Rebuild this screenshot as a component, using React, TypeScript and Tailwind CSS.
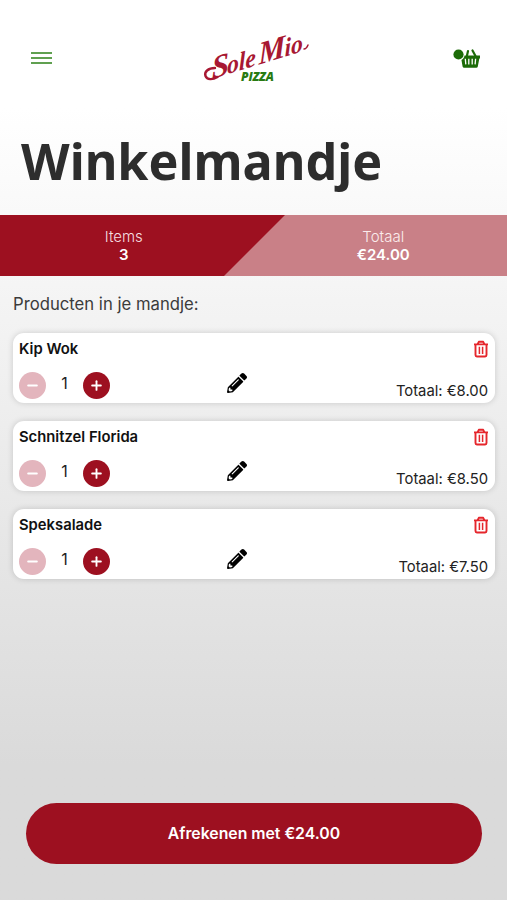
import React from 'react';
import { FaPencilAlt } from 'react-icons/fa';
import { FiMinus, FiPlus } from 'react-icons/fi';

interface CartItem {
  id: number;
  name: string;
  quantity: number;
  total: string;
}

const items: CartItem[] = [
  { id: 1, name: 'Kip Wok', quantity: 1, total: '€8.00' },
  { id: 2, name: 'Schnitzel Florida', quantity: 1, total: '€8.50' },
  { id: 3, name: 'Speksalade', quantity: 1, total: '€7.50' },
];

const Logo: React.FC = () => (
  <svg className="h-[64px] w-[120px] overflow-visible" viewBox="0 0 120 64" role="img" aria-label="Sole Mio Pizza">
    <g
      transform="translate(12 53) rotate(-17) skewX(-16)"
      className="fill-[#a81832] font-['Liberation_Serif',serif] font-bold italic"
    >
      <text className="text-[31px]" textLength="18" lengthAdjust="spacingAndGlyphs">S</text>
      <text x="16" className="text-[25px]" textLength="30" lengthAdjust="spacingAndGlyphs">ole</text>
      <text x="49" className="text-[31px]" textLength="28" lengthAdjust="spacingAndGlyphs">M</text>
      <text x="76" className="text-[25px]" textLength="19" lengthAdjust="spacingAndGlyphs">io</text>
    </g>
    {/* swashes on the capitals and the last letter */}
    <g className="fill-none stroke-[#a81832]" strokeLinecap="round">
      <path d="M15 42C8 42 4 46 5.500 50c1.500 4 7 4 12 1" strokeWidth="2.4" />
      <path d="M104 23c2 0 3-1.500 4-4" strokeWidth="1.500" />
    </g>
    <text
      x="41"
      y="55"
      className="fill-[#287a12] font-['Open_Sans',sans-serif] text-[12.5px] font-extrabold italic"
      textLength="33"
      lengthAdjust="spacingAndGlyphs"
    >
      PIZZA
    </text>
  </svg>
);

const BasketIcon: React.FC = () => (
  <svg className="h-[22px] w-[28px] text-[#1c6b08]" viewBox="0 0 28 22" fill="none">
    <path d="M14 8.500 15 4M19.500 3.500 22.500 9" stroke="currentColor" strokeWidth="2.2" strokeLinecap="round" />
    <path d="M8 8.500h19v3h-.7l-1.500 8a1.600 1.600 0 0 1-1.600 1.300H11.200a1.600 1.600 0 0 1-1.600-1.300L8.200 11.500H8Z" fill="currentColor" />
    <path d="M12.300 11.800l.5 5.600M15.800 11.800v5.600M19.200 11.800v5.600M22.600 11.800l-.5 5.600" stroke="white" strokeWidth="1.300" />
    <circle cx="5.500" cy="7.500" r="6.200" fill="white" />
    <circle cx="5.500" cy="7.500" r="5.100" fill="currentColor" />
  </svg>
);

const TrashIcon: React.FC = () => (
  <svg className="h-[18px] w-[16px] text-[#e5262c]" viewBox="0 0 16 18" fill="none" stroke="currentColor" strokeWidth="1.9">
    <path d="M1 4.400h14M4.600 4.200 5.800 1.800h4.400l1.200 2.400" strokeLinejoin="round" />
    <path d="M2.500 4.600v10.500c0 .8.6 1.400 1.400 1.400h8.200c.8 0 1.400-.6 1.400-1.400V4.600" />
    <path d="M6.400 6.800v7.200M9.600 6.800v7.200" strokeWidth="1.500" />
  </svg>
);

const Header: React.FC = () => (
  <header className="flex h-[108px] items-center justify-between bg-white pt-[7px] pr-[26px] pl-[31px]">
    <button className="flex w-[36px] flex-col gap-[3px]" aria-label="Menu">
      <span className="h-[2px] w-[21px] bg-[#60a050]" />
      <span className="h-[2px] w-[21px] bg-[#60a050]" />
      <span className="h-[2px] w-[21px] bg-[#60a050]" />
    </button>
    <Logo />
    <button aria-label="Winkelmandje">
      <BasketIcon />
    </button>
  </header>
);

const Summary: React.FC = () => (
  <section className="relative grid h-[61px] grid-cols-2 bg-[#c98087] text-center text-[15px] leading-[18px] text-white">
    <div className="absolute inset-y-0 left-0 w-[285px] bg-[#9d1020] [clip-path:polygon(0_0,100%_0,224px_100%,0_100%)]" />
    <div className="relative pt-[13px] pr-[6px]">
      <p className="font-light text-[#f6dfe1]">Items</p>
      <p className="font-semibold">3</p>
    </div>
    <div className="relative pt-[13px] pl-[6px]">
      <p className="font-light text-[#fbecec]">Totaal</p>
      <p className="font-semibold">€24.00</p>
    </div>
  </section>
);

const CartCard: React.FC<{ item: CartItem }> = ({ item }) => (
  <li className="flex h-[70px] flex-col justify-between rounded-[11px] bg-white px-[6px] pt-[6px] pb-[3px] shadow-[0_0_6px_rgba(0,0,0,0.16)]">
    <div className="flex h-5 items-start justify-between">
      <h3 className="text-[14.8px] leading-5 font-semibold text-[#111]">{item.name}</h3>
      <button className="pt-[1px]" aria-label="Verwijderen">
        <TrashIcon />
      </button>
    </div>
    <div className="grid grid-cols-3 items-end">
      <div className="flex items-center">
        <button className="flex size-[27px] items-center justify-center rounded-full bg-[#e3b5bd] text-white" aria-label="Minder">
          <FiMinus className="size-[15px]" strokeWidth={3} />
        </button>
        <span className="w-[37px] pb-[5px] text-center text-[16px] text-[#222]">{item.quantity}</span>
        <button className="flex size-[27px] items-center justify-center rounded-full bg-[#9d1020] text-white" aria-label="Meer">
          <FiPlus className="size-[15px]" strokeWidth={3} />
        </button>
      </div>
      <button className="mb-[7px] ml-[51px]" aria-label="Bewerken">
        <FaPencilAlt className="size-[20px] text-black" />
      </button>
      <p className="-mb-px pr-[1px] text-right text-[14.8px] leading-5 text-[#222]">Totaal: {item.total}</p>
    </div>
  </li>
);

const App: React.FC = () => (
  <div className="flex h-[900px] w-[507px] flex-col overflow-hidden bg-linear-to-b from-white from-12% to-[#dadada] to-85% font-['Inter',sans-serif]">
    <Header />
    <h1 className="h-[107px] pt-[17px] pl-[21px] font-['Noto_Sans',sans-serif] text-[50.3px] leading-[71px] font-bold text-[#2d2d2d]">
      Winkelmandje
    </h1>
    <Summary />
    <main className="flex-1 pt-[16px] pr-[12px] pl-[13px]">
      <h2 className="text-[16.7px] leading-6 text-[#3b3b3b]">Producten in je mandje:</h2>
      <ul className="mt-[17px] flex flex-col gap-[18px]">
        {items.map((item) => (
          <CartCard key={item.id} item={item} />
        ))}
      </ul>
    </main>
    <footer className="pr-[25px] pb-[36px] pl-[26px]">
      <button className="h-[61px] w-full rounded-full bg-[#9d1020] text-[15.8px] font-semibold text-white">
        Afrekenen met €24.00
      </button>
    </footer>
  </div>
);

export default App;
